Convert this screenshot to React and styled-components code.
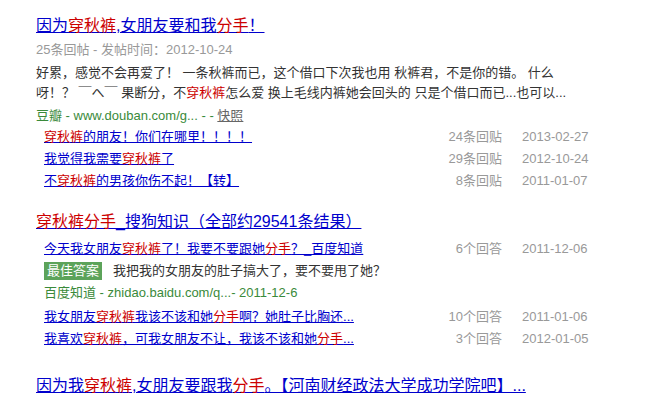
import styled, { createGlobalStyle } from "styled-components"

const GlobalStyle = createGlobalStyle`
body {
  margin: 0;
  background: #fff;
  font-family: "Liberation Sans", "Noto Sans CJK SC", sans-serif;
}
`

const Page = styled.div`
padding: 16px 0 0 36px;
width: 665px;
box-sizing: border-box;
`

const Result = styled.div`
margin-bottom: ${(p) => p.gap || 0}px;
`

const Title = styled.a`
display: inline-block;
font-size: 16px;
line-height: 20px;
color: #0000cc;
text-decoration: underline;
`

const Hl = styled.em`
font-style: normal;
color: #cc0000;
`

const Meta = styled.div`
font-size: 13px;
line-height: 20px;
color: #999;
margin-top: 4px;
`

const Snippet = styled.div`
font-size: 13px;
line-height: 20px;
color: #333;
margin-top: 3px;
`

const Source = styled.div`
font-size: 13px;
line-height: ${(p) => p.lh || 20}px;
color: #3a8a3a;
margin-top: ${(p) => (p.flush ? 0 : 3)}px;
margin-bottom: ${(p) => (p.flush ? 2 : 0)}px;
`

const Cache = styled.a`
color: #666;
text-decoration: underline;
`

const SubList = styled.div`
padding-left: 8px;
margin-top: ${(p) => p.top || 0}px;
`

const SubRow = styled.div`
display: grid;
grid-template-columns: 358px 80px auto;
column-gap: 20px;
font-size: 13px;
line-height: 22px;
white-space: nowrap;
`

const SubLink = styled.a`
color: #0000cc;
text-decoration: underline;
justify-self: start;
`

const Count = styled.span`
color: #999;
text-align: right;
`

const Date = styled.span`
color: #999;
`

const Answer = styled.div`
display: flex;
align-items: center;
gap: 11px;
font-size: 13px;
line-height: 22px;
color: #333;
`

const Badge = styled.span`
background: #5ca35a;
color: #fff;
padding: 0 3px;
line-height: 18px;
`

const subs1 = [
  { parts: [["穿秋裤", 1], ["的朋友！你们在哪里！！！！"]], count: "24条回贴", date: "2013-02-27" },
  { parts: [["我觉得我需要"], ["穿秋裤", 1], ["了"]], count: "29条回贴", date: "2012-10-24" },
  { parts: [["不"], ["穿秋裤", 1], ["的男孩你伤不起！【转】"]], count: "8条回贴", date: "2011-01-07" },
]

const subs2 = [
  { parts: [["我女朋友"], ["穿秋裤", 1], ["我该不该和她"], ["分手", 1], ["啊？她肚子比胸还..."]], count: "10个回答", date: "2011-01-06" },
  { parts: [["我喜欢"], ["穿秋裤", 1], ["，可我女朋友不让，我该不该和她"], ["分手", 1], ["..."]], count: "3个回答", date: "2012-01-05" },
]

const Parts = ({ parts }) =>
  parts.map(([t, hl], i) => (hl ? <Hl key={i}>{t}</Hl> : <span key={i}>{t}</span>))

const Sub = ({ item }) => (
  <SubRow>
    <SubLink href="#"><Parts parts={item.parts} /></SubLink>
    <Count>{item.count}</Count>
    <Date>{item.date}</Date>
  </SubRow>
)

export default function App() {
  return (
    <Page>
      <GlobalStyle />
      <Result gap={20}>
        <Title href="#">因为<Hl>穿秋裤</Hl>,女朋友要和我<Hl>分手</Hl>！</Title>
        <Meta>25条回帖 - 发帖时间：2012-10-24</Meta>
        <Snippet>
          好累，感觉不会再爱了！ 一条秋裤而已，这个借口下次我也用 秋裤君，不是你的错。 什么<br />
          呀！？ ￣へ￣ 果断分，不<Hl>穿秋裤</Hl>怎么爱 换上毛线内裤她会回头的 只是个借口而已...也可以...
        </Snippet>
        <Source>豆瓣 - www.douban.com/g... - - <Cache href="#">快照</Cache></Source>
        <SubList>
          {subs1.map((s, i) => <Sub key={i} item={s} />)}
        </SubList>
      </Result>

      <Result gap={26}>
        <Title href="#"><Hl>穿秋裤分手</Hl>_搜狗知识（全部约29541条结果）</Title>
        <SubList top={6}>
          <Sub item={{ parts: [["今天我女朋友"], ["穿秋裤", 1], ["了！我要不要跟她"], ["分手", 1], ["？_百度知道"]], count: "6个回答", date: "2011-12-06" }} />
          <Answer>
            <Badge>最佳答案</Badge>
            我把我的女朋友的肚子搞大了，要不要甩了她？
          </Answer>
          <Source flush lh={22}>百度知道 - zhidao.baidu.com/q...- 2011-12-6</Source>
          {subs2.map((s, i) => <Sub key={i} item={s} />)}
        </SubList>
      </Result>

      <Result>
        <Title href="#">因为我<Hl>穿秋裤</Hl>,女朋友要跟我<Hl>分手</Hl>。【河南财经政法大学成功学院吧】...</Title>
      </Result>
    </Page>
  )
}
